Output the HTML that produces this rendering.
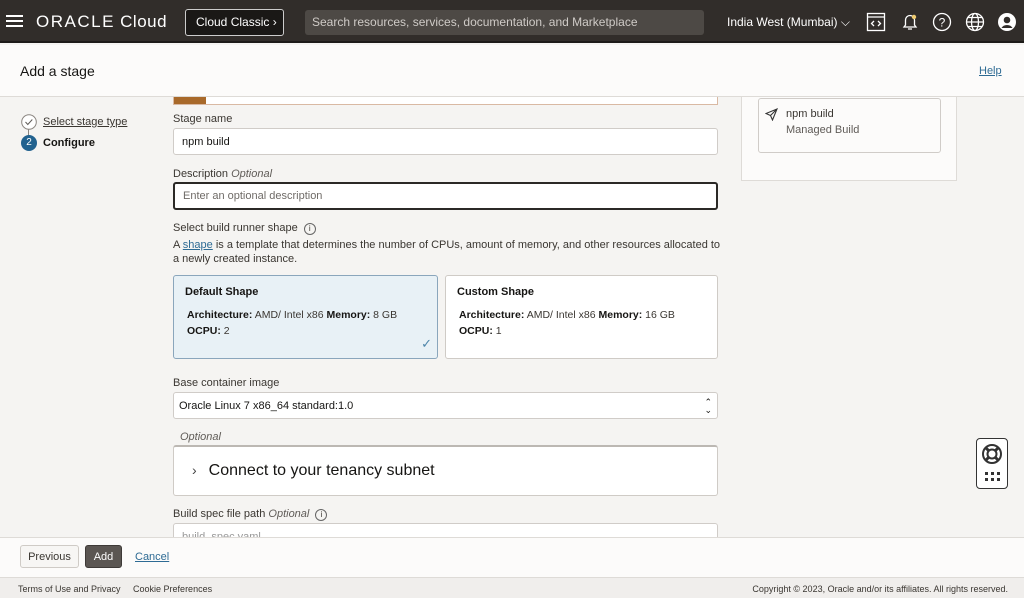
<!DOCTYPE html>
<html><head><style>
*{box-sizing:border-box;margin:0;padding:0}
body{width:1024px;height:598px;overflow:hidden;font-family:"Liberation Sans",sans-serif;background:#f5f4f2;color:#161513;position:relative;font-size:11px}
.abs{position:absolute}
.top{left:0;top:0;width:1024px;height:43px;background:#312d2a;border-bottom:2px solid #1d1b19}
.inp{position:absolute;left:173px;width:545px;background:#fff;border:1px solid #d0ccc8;border-radius:3px;font-size:11px;padding-left:8px;display:flex;align-items:center}
.lbl{position:absolute;left:173px;font-size:11px;color:#3a3631}
i{color:#5f5b57}
.card{position:absolute;top:275px;height:84px;width:265px;border:1px solid #cfcbc6;border-radius:3px;background:#fff;padding:10px 11px}
.card h4{font-size:11px;margin-bottom:9px}
.card p{font-size:10.5px;line-height:16px;padding-left:2px;color:#3a3631}
.card b{color:#161513}
</style></head><body>
<div class="abs top">
 <div class="abs" style="left:6px;top:15px;width:17px;height:2px;background:#fff;box-shadow:0 5px 0 #fff,0 10px 0 #fff"></div>
 <div class="abs" style="left:36px;top:12px;color:#fff;font-size:17px;letter-spacing:0.5px"><b style="font-weight:normal;letter-spacing:1.5px">ORACLE</b> Cloud</div>
 <div class="abs" style="left:185px;top:9px;width:99px;height:27px;border:1px solid #ccc;border-radius:3px;color:#fff;font-size:12px;line-height:25px;padding-left:10px;background:#1a1816">Cloud Classic ›</div>
 <div class="abs" style="left:305px;top:10px;width:399px;height:25px;background:#4d4945;border-radius:3px;color:#cfcbc7;font-size:12px;line-height:25px;padding-left:7px">Search resources, services, documentation, and Marketplace</div>
 <div class="abs" style="left:727px;top:15px;color:#fff;font-size:12px">India West (Mumbai) ⌵</div>
 <svg class="abs" style="left:866px;top:12px" width="20" height="20" viewBox="0 0 20 20" fill="none" stroke="#fff" stroke-width="1.3"><rect x="1.5" y="1.5" width="17" height="17"/><line x1="1.5" y1="5" x2="18.5" y2="5"/><path d="M8 9l-2.5 2.5L8 14M12 9l2.5 2.5L12 14"/></svg>
 <svg class="abs" style="left:900px;top:12px" width="20" height="20" viewBox="0 0 20 20" fill="none" stroke="#fff" stroke-width="1.3"><path d="M4 15h12l-1.5-2V8a4.5 4.5 0 0 0-9 0v5z M8 17h4"/><circle cx="14" cy="5" r="2.2" fill="#f0cc71" stroke="none"/></svg>
 <svg class="abs" style="left:932px;top:12px" width="20" height="20" viewBox="0 0 20 20" fill="none" stroke="#fff" stroke-width="1.3"><circle cx="10" cy="10" r="8.5"/><text x="10" y="14.5" fill="#fff" stroke="none" font-size="12" text-anchor="middle" font-family="Liberation Sans">?</text></svg>
 <svg class="abs" style="left:965px;top:12px" width="20" height="20" viewBox="0 0 20 20" fill="none" stroke="#fff" stroke-width="1.3"><circle cx="10" cy="10" r="8.5"/><ellipse cx="10" cy="10" rx="3.5" ry="8.5"/><path d="M1.5 10h17M3 5.5h14M3 14.5h14"/></svg>
 <svg class="abs" style="left:997px;top:12px" width="20" height="20" viewBox="0 0 20 20"><circle cx="10" cy="10" r="9" fill="#fff"/><circle cx="10" cy="8" r="3.3" fill="#312d2a"/><path d="M4.5 16a6 5 0 0 1 11 0z" fill="#312d2a"/></svg>
</div>
<div class="abs" style="left:0;top:45px;width:1024px;height:52px;background:#fcfbfa;border-bottom:1px solid #dedbd7"></div>
<div class="abs" style="left:20px;top:63px;font-size:14px">Add a stage</div>
<div class="abs" style="left:979px;top:65px;font-size:11px;color:#2e6b94;text-decoration:underline">Help</div>

<svg class="abs" style="left:21px;top:114px" width="16" height="16"><circle cx="8" cy="8" r="7.3" fill="#fff" stroke="#8a8580"/><path d="M4.5 8l2.3 2.5 4.5-5" fill="none" stroke="#5f5b57"/></svg>
<div class="abs" style="left:28px;top:129px;width:1px;height:7px;background:#8a8580"></div>
<div class="abs" style="left:43px;top:116px;color:#3a3631;text-decoration:underline">Select stage type</div>
<div class="abs" style="left:21px;top:135px;width:16px;height:16px;border-radius:50%;background:#22628f;color:#fff;text-align:center;line-height:16px;font-size:10px">2</div>
<div class="abs" style="left:43px;top:137px;font-weight:bold">Configure</div>

<div class="abs" style="left:173px;top:97px;width:545px;height:8px;background:#fff;border:1px solid #d9b9a3;border-top:none"></div>
<div class="abs" style="left:174px;top:97px;width:32px;height:7px;background:#a8692a"></div>

<div class="lbl" style="top:113px">Stage name</div>
<div class="inp" style="top:128px;height:27px">npm build</div>
<div class="lbl" style="top:168px">Description <i>Optional</i></div>
<div class="inp" style="top:182px;height:28px;border:2px solid #2b2926;color:#6f6b67">Enter an optional description</div>
<div class="lbl" style="top:222px">Select build runner shape <span style="display:inline-block;width:12px;height:12px;border:1px solid #666;border-radius:50%;font-size:8px;text-align:center;line-height:10px;margin-left:3px">i</span></div>
<div class="lbl" style="top:238px;line-height:14px;width:548px">A <u style="color:#2e6b94">shape</u> is a template that determines the number of CPUs, amount of memory, and other resources allocated to a newly created instance.</div>

<div class="card" style="left:173px;background:#e8f1f6;border-color:#8aa6bc">
 <h4>Default Shape</h4><p><b>Architecture:</b> AMD/ Intel x86 <b>Memory:</b> 8 GB<br><b>OCPU:</b> 2</p>
 <span class="abs" style="right:5px;bottom:6px;color:#4e86aa;font-size:13px">✓</span>
</div>
<div class="card" style="left:445px;width:273px">
 <h4>Custom Shape</h4><p><b>Architecture:</b> AMD/ Intel x86 <b>Memory:</b> 16 GB<br><b>OCPU:</b> 1</p>
</div>

<div class="lbl" style="top:377px">Base container image</div>
<div class="inp" style="top:392px;height:27px;padding-left:5px">Oracle Linux 7 x86_64 standard:1.0<span class="abs" style="right:5px;top:5px;font-size:9px;line-height:8px">⌃<br>⌄</span></div>
<div class="lbl" style="top:431px;left:180px"><i>Optional</i></div>
<div class="abs" style="left:173px;top:445px;width:545px;height:51px;background:#fff;border:1px solid #cfcbc6;border-top:2px solid #bcb8b3;border-radius:3px"></div>
<div class="abs" style="left:192px;top:462px;font-size:16px;color:#161513"><span style="font-size:14px;margin-right:12px;color:#444">›</span>Connect to your tenancy subnet</div>
<div class="lbl" style="top:508px">Build spec file path <i>Optional</i> <span style="display:inline-block;width:12px;height:12px;border:1px solid #666;border-radius:50%;font-size:8px;text-align:center;line-height:10px;margin-left:3px">i</span></div>
<div class="inp" style="top:523px;height:27px;color:#999">build_spec.yaml</div>

<div class="abs" style="left:741px;top:97px;width:216px;height:84px;background:#fcfbfa;border:1px solid #dedbd7;border-top:none"></div>
<div class="abs" style="left:758px;top:98px;width:183px;height:55px;background:#fcfbfa;border:1px solid #d0ccc8;border-radius:3px"></div>
<svg class="abs" style="left:765px;top:108px" width="13" height="13" viewBox="0 0 13 13" fill="none" stroke="#333" stroke-width="1.1"><path d="M12 1L1 5.5l4.5 2 2 4.5z M5.5 7.5L12 1"/></svg>
<div class="abs" style="left:786px;top:108px;color:#3a3631">npm build</div>
<div class="abs" style="left:786px;top:124px;color:#5f5b57">Managed Build</div>

<div class="abs" style="left:976px;top:438px;width:32px;height:51px;border:1.5px solid #333;border-radius:4px;background:#fff"></div>
<svg class="abs" style="left:981px;top:443px" width="22" height="22" viewBox="0 0 22 22" fill="none" stroke="#333" stroke-width="2"><circle cx="11" cy="11" r="9"/><circle cx="11" cy="11" r="4.5"/><path d="M4.5 4.5l3.5 3.5M17.5 4.5L14 8M4.5 17.5L8 14M17.5 17.5L14 14" stroke-width="3"/></svg>
<div class="abs" style="left:985px;top:472px;width:3px;height:3px;background:#333;box-shadow:6px 0 #333,12px 0 #333,0 6px #333,6px 6px #333,12px 6px #333"></div>

<div class="abs" style="left:0;top:537px;width:1024px;height:40px;background:#fcfbfa;border-top:1px solid #dedbd7"></div>
<div class="abs" style="left:20px;top:545px;width:59px;height:23px;border:1px solid #cfcbc6;border-radius:3px;background:#f7f6f4;text-align:center;line-height:23px;font-size:11px;color:#3a3631">Previous</div>
<div class="abs" style="left:85px;top:545px;width:37px;height:23px;border-radius:3px;background:#5b5652;text-align:center;line-height:22px;font-size:11px;color:#fff;border:1px solid #3e3a37">Add</div>
<div class="abs" style="left:135px;top:551px;color:#2e6b94;text-decoration:underline">Cancel</div>
<div class="abs" style="left:0;top:577px;width:1024px;height:21px;background:#f0eeec;border-top:1px solid #dedbd7"></div>
<div class="abs" style="left:18px;top:584px;font-size:9px;color:#3a3631">Terms of Use and Privacy&nbsp;&nbsp;&nbsp;&nbsp;&nbsp;Cookie Preferences</div>
<div class="abs" style="right:16px;top:584px;font-size:9px;color:#3a3631">Copyright © 2023, Oracle and/or its affiliates. All rights reserved.</div>
</body></html>
